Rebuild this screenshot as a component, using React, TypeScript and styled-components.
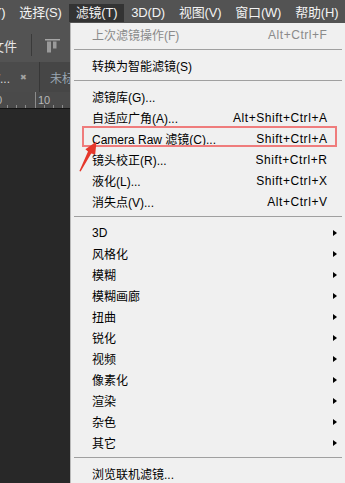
import styled, { createGlobalStyle } from "styled-components";

const GlobalStyle = createGlobalStyle`
  html, body {
    margin: 0;
    padding: 0;
    background: #282828;
  }
  body {
    width: 345px;
    height: 483px;
    overflow: hidden;
    font-family: "Liberation Sans", "Noto Sans CJK SC", sans-serif;
  }
`;

type MenuEntry =
  | { kind: "sep" }
  | {
      kind: "item";
      label: string;
      shortcut?: string;
      sub?: boolean;
      disabled?: boolean;
      marked?: boolean;
    };

const entries: MenuEntry[] = [
  { kind: "item", label: "上次滤镜操作(F)", shortcut: "Alt+Ctrl+F", disabled: true },
  { kind: "sep" },
  { kind: "item", label: "转换为智能滤镜(S)" },
  { kind: "sep" },
  { kind: "item", label: "滤镜库(G)..." },
  { kind: "item", label: "自适应广角(A)...", shortcut: "Alt+Shift+Ctrl+A" },
  { kind: "item", label: "Camera Raw 滤镜(C)...", shortcut: "Shift+Ctrl+A", marked: true },
  { kind: "item", label: "镜头校正(R)...", shortcut: "Shift+Ctrl+R" },
  { kind: "item", label: "液化(L)...", shortcut: "Shift+Ctrl+X" },
  { kind: "item", label: "消失点(V)...", shortcut: "Alt+Ctrl+V" },
  { kind: "sep" },
  { kind: "item", label: "3D", sub: true },
  { kind: "item", label: "风格化", sub: true },
  { kind: "item", label: "模糊", sub: true },
  { kind: "item", label: "模糊画廊", sub: true },
  { kind: "item", label: "扭曲", sub: true },
  { kind: "item", label: "锐化", sub: true },
  { kind: "item", label: "视频", sub: true },
  { kind: "item", label: "像素化", sub: true },
  { kind: "item", label: "渲染", sub: true },
  { kind: "item", label: "杂色", sub: true },
  { kind: "item", label: "其它", sub: true },
  { kind: "sep" },
  { kind: "item", label: "浏览联机滤镜..." },
];

const menuTitles = ["文字(Y)", "选择(S)", "滤镜(T)", "3D(D)", "视图(V)", "窗口(W)", "帮助(H)"];

function App() {
  return (
    <>
      <GlobalStyle />
      <Screen>
        <MenuBar>
          {menuTitles.map((t, i) => (
            <MenuTitle key={t} $active={t === "滤镜(T)"} $first={i === 0}>
              {t}
            </MenuTitle>
          ))}
        </MenuBar>

        <OptionsBar>
          <ToolLabel>文件</ToolLabel>
          <ToolDivider />
          <svg width="15" height="14" viewBox="0 0 15 14">
            <rect x="0" y="0" width="15" height="1.5" fill="#a6a6a6" />
            <rect x="2" y="2.5" width="4" height="11" fill="#9a9a9a" />
            <rect x="8" y="2.5" width="3.5" height="7" fill="#9a9a9a" />
          </svg>
        </OptionsBar>

        <TabBar>
          <DocTab $active>
            <TabTitle>未标题-1 @ 66.7%(RGB/8#)/...</TabTitle>
            <TabClose>✖</TabClose>
          </DocTab>
          <DocTab>
            <TabTitle>未标题</TabTitle>
          </DocTab>
        </TabBar>

        <Ruler>
          <svg width="345" height="16" viewBox="0 0 345 16">
            <text x="-4" y="12" fontSize="11" fill="#b8b8b8" fontFamily="Liberation Sans, sans-serif">0</text>
            <text x="38" y="12" fontSize="11" fill="#b8b8b8" fontFamily="Liberation Sans, sans-serif">10</text>
            <line x1="35.5" y1="0" x2="35.5" y2="16" stroke="#8c8c8c" />
            {[7, 16, 25, 44, 53, 62].map((x) => (
              <line key={x} x1={x + 0.5} y1="13" x2={x + 0.5} y2="16" stroke="#8c8c8c" />
            ))}
          </svg>
        </Ruler>

        <Canvas />

        <Dropdown>
          {entries.map((e, i) =>
            e.kind === "sep" ? (
              <Separator key={i} />
            ) : (
              <Item key={i} $disabled={e.disabled} $marked={e.marked}>
                <ItemLabel>{e.label}</ItemLabel>
                <Shortcut>{e.shortcut}</Shortcut>
                <SubSlot>{e.sub && <SubArrow />}</SubSlot>
              </Item>
            )
          )}
        </Dropdown>

        <Pointer width="26" height="36" viewBox="0 0 26 36">
          <polygon
            points="20.5,3.5 19.2,16.6 15.2,15.4 4.6,33.6 3.4,33 12,13.6 9.4,11.2"
            fill="#e5372b"
          />
        </Pointer>
      </Screen>
    </>
  );
}

export default App;

const Screen = styled.div`
  position: relative;
  width: 345px;
  height: 483px;
  display: flex;
  flex-direction: column;
  overflow: hidden;
  background: #282828;
`;

const MenuBar = styled.div`
  height: 23px;
  display: flex;
  align-items: flex-start;
  background: #535353;
  white-space: nowrap;
`;

const MenuTitle = styled.div<{ $active?: boolean; $first?: boolean }>`
  margin-top: 4px;
  margin-left: ${(p) => (p.$first ? "-44px" : "0")};
  height: 18px;
  line-height: 18px;
  padding: 0 7px 0 7px;
  font-size: 13px;
  letter-spacing: -0.2px;
  color: #f2f2f2;
  background: ${(p) => (p.$active ? "#333333" : "transparent")};
`;

const OptionsBar = styled.div`
  height: 39px;
  padding-top: 5px;
  box-sizing: border-box;
  display: flex;
  align-items: center;
  background: #535353;
  svg {
    margin-left: 13px;
    margin-top: 1px;
  }
`;

const ToolLabel = styled.span`
  margin-left: -9px;
  font-size: 13px;
  color: #e6e6e6;
  white-space: nowrap;
`;

const ToolDivider = styled.div`
  margin-left: 14px;
  width: 1px;
  height: 22px;
  background: #3a3a3a;
`;

const TabBar = styled.div`
  height: 30px;
  display: flex;
  background: #464646;
  white-space: nowrap;
`;

const DocTab = styled.div<{ $active?: boolean }>`
  display: flex;
  align-items: center;
  justify-content: ${(p) => (p.$active ? "flex-end" : "flex-start")};
  width: ${(p) => (p.$active ? "40px" : "30px")};
  padding: ${(p) => (p.$active ? "0 12px 0 0" : "0 0 0 10px")};
  box-sizing: border-box;
  overflow: hidden;
  border-right: ${(p) => (p.$active ? "1px solid #373737" : "none")};
  color: ${(p) => (p.$active ? "#d8d8d8" : "#9aa6b2")};
  background: ${(p) => (p.$active ? "#4b4b4b" : "transparent")};
`;

const TabTitle = styled.span`
  flex: none;
  font-size: 12px;
`;

const TabClose = styled.span`
  flex: none;
  margin-left: 10px;
  font-size: 8px;
  color: #a3a3a3;
`;

const Ruler = styled.div`
  height: 16px;
  background: #4a4a4a;
  border-bottom: 1px solid #141414;
  svg {
    display: block;
  }
`;

const Canvas = styled.div`
  flex: 1;
  background: #282828;
`;

const Dropdown = styled.div`
  position: absolute;
  left: 70px;
  top: 23px;
  width: 275px;
  height: 460px;
  padding-top: 1px;
  box-sizing: border-box;
  background: #f0f0f0;
  border-left: 1px solid #b9b9b9;
  font-size: 12px;
`;

const Item = styled.div<{ $disabled?: boolean; $marked?: boolean }>`
  position: relative;
  height: 21px;
  display: grid;
  grid-template-columns: 1fr auto 11px;
  align-items: center;
  padding: 0 7px 0 21px;
  color: ${(p) => (p.$disabled ? "#8a8a8a" : "#000000")};
  white-space: nowrap;

  &::after {
    content: "";
    display: ${(p) => (p.$marked ? "block" : "none")};
    position: absolute;
    left: 11px;
    right: 8px;
    top: -2px;
    height: 21px;
    box-sizing: border-box;
    border: 2px solid #ef7c7c;
  }
`;

const ItemLabel = styled.span``;

const Shortcut = styled.span`
  letter-spacing: 0.55px;
  margin-right: -0.5px;
`;

const SubSlot = styled.span`
  display: flex;
  justify-content: flex-end;
  padding-right: 1px;
`;

const SubArrow = styled.span`
  width: 0;
  height: 0;
  border-top: 3.5px solid transparent;
  border-bottom: 3.5px solid transparent;
  border-left: 4px solid #000;
`;

const Separator = styled.div`
  height: 1px;
  margin: 4px 3px 5px 3px;
  background: #a0a0a0;
`;

const Pointer = styled.svg`
  position: absolute;
  left: 76px;
  top: 138px;
`;
